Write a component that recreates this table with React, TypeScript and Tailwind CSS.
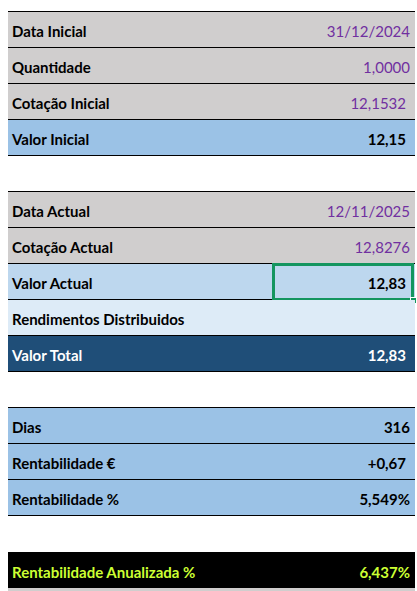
import React from 'react';

type Row = {
    label: string;
    value: string;
    bg: string;
    labelColor?: string;
    valueClass: string;
    indent?: boolean;
    selected?: boolean;
};

const purple = 'text-[#7030a0] font-normal';
const black = 'text-black font-bold';

const groups: Row[][] = [
    [
        { label: 'Data Inicial', value: '31/12/2024', bg: 'bg-[#d0cece]', valueClass: purple },
        { label: 'Quantidade', value: '1,0000', bg: 'bg-[#d0cece]', valueClass: purple },
        { label: 'Cotação Inicial', value: '12,1532', bg: 'bg-[#d0cece]', valueClass: purple, indent: true },
        { label: 'Valor Inicial', value: '12,15', bg: 'bg-[#9bc2e6]', valueClass: black, indent: true },
    ],
    [
        { label: 'Data Actual', value: '12/11/2025', bg: 'bg-[#d0cece]', valueClass: purple },
        { label: 'Cotação Actual', value: '12,8276', bg: 'bg-[#d0cece]', valueClass: purple },
        { label: 'Valor Actual', value: '12,83', bg: 'bg-[#bdd7ee]', valueClass: black, indent: true, selected: true },
        { label: 'Rendimentos Distribuidos', value: '', bg: 'bg-[#ddebf7]', valueClass: black },
        { label: 'Valor Total', value: '12,83', bg: 'bg-[#1f4e78]', labelColor: 'text-white', valueClass: 'text-white font-bold', indent: true },
    ],
    [
        { label: 'Dias', value: '316', bg: 'bg-[#9bc2e6]', valueClass: black },
        { label: 'Rentabilidade €', value: '+0,67', bg: 'bg-[#9bc2e6]', valueClass: black, indent: true },
        { label: 'Rentabilidade %', value: '5,549%', bg: 'bg-[#9bc2e6]', valueClass: black },
    ],
];

const SheetRow = ({ row }: { row: Row }) => (
    <div className={`relative flex items-center justify-between h-[36px] pt-[3px] border-b border-black ${row.bg}`}>
        <span className={`pl-[4px] font-bold ${row.labelColor || 'text-black'}`}>{row.label}</span>
        <span className={`${row.indent ? 'pr-[9px]' : 'pr-[5px]'} ${row.valueClass}`}>{row.value}</span>
        {row.selected && (
            <div className="absolute left-[264px] right-[1px] top-[-1px] h-[38px] border-[3px] border-[#14955f]">
                <div className="absolute right-[-6px] bottom-[-6px] w-[7px] h-[7px] bg-[#14955f] border border-white"></div>
            </div>
        )}
    </div>
);

export default function App() {
    return (
        <div className="w-[417px] h-[591px] overflow-hidden bg-white pt-[11px] pl-[8px] pr-[2px] text-[15px] leading-[18px] font-['Lato','Liberation_Sans',sans-serif]">
            <div className="flex flex-col gap-[35px]">
                {groups.map((g, i) => (
                    <div key={i} className="border-t border-black">
                        {g.map(r => <SheetRow key={r.label} row={r} />)}
                    </div>
                ))}
            </div>
            <div className="mt-[36px] flex items-center justify-between h-[36px] pt-[3px] bg-black text-[#ccff33] font-bold">
                <span className="pl-[4px]">Rentabilidade Anualizada %</span>
                <span className="pr-[5px]">6,437%</span>
            </div>
            <div className="h-[10px] bg-[#d0cece]"></div>
        </div>
    );
}
